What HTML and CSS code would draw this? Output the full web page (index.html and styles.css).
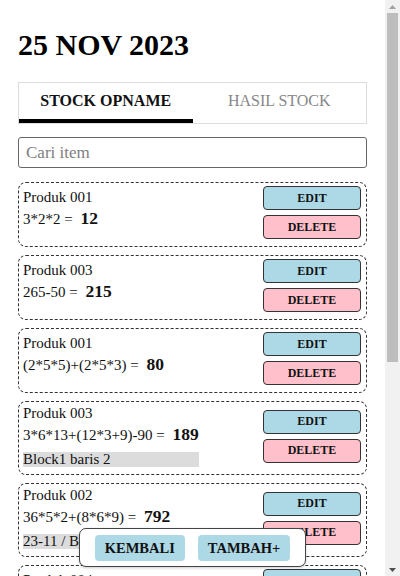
FILE: index.html
```html
<!DOCTYPE html>
<html lang="id">
<head>
<meta charset="utf-8">
<title>Stock Opname</title>
<link rel="stylesheet" href="styles.css">
</head>
<body>
<div class="page">
  <h1 class="date">25 NOV 2023</h1>
  <div class="tabs">
    <div class="tab active">STOCK OPNAME</div>
    <div class="tab">HASIL STOCK</div>
  </div>
  <input class="search" type="text" placeholder="Cari item">
  <div class="list">
    <div class="card">
      <div class="info">
        <div class="name">Produk 001</div>
        <div class="calc">3*2*2 = <b class="total">12</b></div>
        <div class="note"></div>
      </div>
      <div class="actions"><button class="btn edit">EDIT</button><button class="btn delete">DELETE</button></div>
    </div>
    <div class="card">
      <div class="info">
        <div class="name">Produk 003</div>
        <div class="calc">265-50 = <b class="total">215</b></div>
        <div class="note"></div>
      </div>
      <div class="actions"><button class="btn edit">EDIT</button><button class="btn delete">DELETE</button></div>
    </div>
    <div class="card">
      <div class="info">
        <div class="name">Produk 001</div>
        <div class="calc">(2*5*5)+(2*5*3) = <b class="total">80</b></div>
        <div class="note"></div>
      </div>
      <div class="actions"><button class="btn edit">EDIT</button><button class="btn delete">DELETE</button></div>
    </div>
    <div class="card">
      <div class="info">
        <div class="name">Produk 003</div>
        <div class="calc">3*6*13+(12*3+9)-90 = <b class="total">189</b></div>
        <div class="note filled">Block1 baris 2</div>
      </div>
      <div class="actions"><button class="btn edit">EDIT</button><button class="btn delete">DELETE</button></div>
    </div>
    <div class="card">
      <div class="info">
        <div class="name">Produk 002</div>
        <div class="calc">36*5*2+(8*6*9) = <b class="total">792</b></div>
        <div class="note filled">23-11 / Block2 baris 1</div>
      </div>
      <div class="actions"><button class="btn edit">EDIT</button><button class="btn delete">DELETE</button></div>
    </div>
    <div class="card">
      <div class="info">
        <div class="name">Produk 004</div>
        <div class="calc">12*4 = <b class="total">48</b></div>
        <div class="note"></div>
      </div>
      <div class="actions"><button class="btn edit">EDIT</button><button class="btn delete">DELETE</button></div>
    </div>
    <div class="card">
      <div class="info">
        <div class="name">Produk 005</div>
        <div class="calc">10*10 = <b class="total">100</b></div>
        <div class="note"></div>
      </div>
      <div class="actions"><button class="btn edit">EDIT</button><button class="btn delete">DELETE</button></div>
    </div>
    <div class="card">
      <div class="info">
        <div class="name">Produk 002</div>
        <div class="calc">7*8 = <b class="total">56</b></div>
        <div class="note"></div>
      </div>
      <div class="actions"><button class="btn edit">EDIT</button><button class="btn delete">DELETE</button></div>
    </div>
    <div class="card">
      <div class="info">
        <div class="name">Produk 006</div>
        <div class="calc">5*5*2 = <b class="total">50</b></div>
        <div class="note"></div>
      </div>
      <div class="actions"><button class="btn edit">EDIT</button><button class="btn delete">DELETE</button></div>
    </div>
  </div>
</div>
<div class="bar-wrap">
  <div class="bottombar">
    <button class="bar-btn">KEMBALI</button>
    <button class="bar-btn">TAMBAH+</button>
  </div>
</div>
<div class="scrollbar" aria-hidden="true">
  <div class="sb-arrow">
    <svg width="7" height="4" viewBox="0 0 7 4"><polygon points="0,4 7,4 3.5,0" fill="#a3a3a3"/></svg>
  </div>
  <div class="sb-track"><div class="sb-thumb"></div></div>
  <div class="sb-arrow">
    <svg width="7" height="4" viewBox="0 0 7 4"><polygon points="0,0 7,0 3.5,4" fill="#505050"/></svg>
  </div>
</div>
</body>
</html>
```

FILE: styles.css
```css
html, body {
  margin: 0;
  padding: 0;
  background: #fff;
  overflow: hidden;
}
body {
  font-family: "Liberation Serif", "Times New Roman", serif;
  font-size: 15px;
  color: #111;
}
.page {
  margin-right: 15px;
  padding: 27px 18px 52px;
}
.date {
  margin: 0 0 20px;
  font-size: 30px;
  line-height: 35px;
  font-weight: bold;
  color: #000;
}
.tabs {
  display: flex;
  border: 1px solid #ddd;
}
.tab {
  flex: 1;
  text-align: center;
  padding: 9px 0;
  line-height: 18px;
  font-size: 16px;
  color: #888;
  border-bottom: 4px solid transparent;
}
.tab.active {
  color: #111;
  font-weight: bold;
  border-bottom-color: #000;
}
.search {
  display: block;
  box-sizing: border-box;
  width: 100%;
  height: 31px;
  margin: 13px 0 14px;
  padding: 0 7px;
  border: 1px solid #666;
  border-radius: 3px;
  font-family: "Liberation Serif", "Times New Roman", serif;
  font-size: 17px;
  color: #111;
  outline: none;
}
.search::placeholder {
  color: #808080;
}
.list {
  display: flex;
  flex-direction: column;
  gap: 8px;
}
.card {
  display: flex;
  align-items: center;
  padding: 3px 5px 5px 4px;
  border: 1px dashed #333;
  border-radius: 8px;
}
.info {
  flex: 0 0 52%;
  display: flex;
  flex-direction: column;
}
.name {
  line-height: 17px;
}
.calc {
  margin-top: 2px;
  white-space: nowrap;
}
.total {
  font-size: 17.5px;
  margin-left: 4px;
}
.note {
  margin: 7px 0 2px;
  line-height: 15px;
}
.note.filled {
  background: #dcdcdc;
  white-space: nowrap;
  overflow: hidden;
}
.actions {
  margin-left: auto;
  width: 98px;
  display: flex;
  flex-direction: column;
  gap: 5px;
  padding-bottom: 2px;
}
.btn {
  height: 24px;
  padding: 0;
  border: 1px solid #333;
  border-radius: 4px;
  font-family: "Liberation Serif", "Times New Roman", serif;
  font-size: 12px;
  font-weight: bold;
  color: #111;
}
.edit {
  background: #add8e6;
}
.delete {
  background: #ffc0cb;
}
.bar-wrap {
  position: fixed;
  left: 0;
  right: 15px;
  bottom: 9px;
  display: flex;
  justify-content: center;
  pointer-events: none;
}
.bottombar {
  display: flex;
  gap: 13px;
  padding: 6px 15px 5px;
  background: #fff;
  border: 1px solid #444;
  border-radius: 7px;
  box-shadow: 0 1px 3px rgba(0, 0, 0, 0.2);
  pointer-events: auto;
}
.bar-btn {
  height: 26px;
  padding: 0 10px;
  border: none;
  border-radius: 4px;
  background: #add8e6;
  font-family: "Liberation Serif", "Times New Roman", serif;
  font-size: 14.5px;
  font-weight: bold;
  color: #111;
  white-space: nowrap;
}
.scrollbar {
  position: fixed;
  top: 0;
  right: 0;
  bottom: 0;
  width: 15px;
  display: flex;
  flex-direction: column;
  background: #f1f1f1;
}
.sb-arrow {
  height: 13px;
  display: flex;
  align-items: center;
  justify-content: center;
}
.sb-track {
  flex: 1;
  display: flex;
  flex-direction: column;
  padding: 0 2px;
}
.sb-thumb {
  height: 349px;
  background: #bdbdbd;
}
```
